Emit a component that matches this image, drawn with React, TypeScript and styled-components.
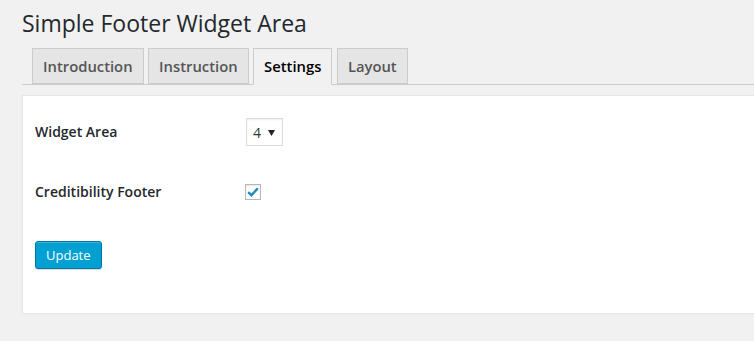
import React from "react";
import styled, { createGlobalStyle } from "styled-components";

const Global = createGlobalStyle`
  html, body { margin: 0; padding: 0; background: #f1f1f1; overflow: hidden; }
  body { font-family: "Open Sans", "Noto Sans", sans-serif; color: #444; }
`;

const Wrap = styled.div`
  padding-left: 22px;
  width: 760px;
`;

const Title = styled.h1`
  margin: 0;
  padding: 9px 0 0 0;
  font-size: 23px;
  font-weight: 400;
  line-height: 29px;
  color: #23282d;
`;

const TabBar = styled.div`
  display: flex;
  gap: 4.5px;
  margin-top: 10px;
  padding-left: 10px;
  border-bottom: 1px solid #ccc;
  height: 36px;
  align-items: flex-end;
`;

const Tab = styled.div<{ $active?: boolean }>`
  box-sizing: border-box;
  height: ${(p) => (p.$active ? "37px" : "36px")};
  margin-bottom: ${(p) => (p.$active ? "-1px" : "0")};
  padding: 5px 10px;
  font-size: 14.8px;
  font-weight: 600;
  line-height: 24px;
  border: 1px solid #ccc;
  border-bottom-color: ${(p) => (p.$active ? "#f1f1f1" : "#ccc")};
  background: ${(p) => (p.$active ? "#f1f1f1" : "#e5e5e5")};
  color: ${(p) => (p.$active ? "#000" : "#555")};
  white-space: nowrap;
`;

const Panel = styled.div`
  margin-top: 10px;
  box-sizing: border-box;
  height: 219px;
  background: #fff;
  border: 1px solid #e5e5e5;
  box-shadow: 0 1px 1px rgba(0, 0, 0, 0.04);
  padding: 17px 12px 0 12px;
`;

const Row = styled.div<{ $gap?: number }>`
  display: grid;
  grid-template-columns: 211px 1fr;
  align-items: center;
  height: 38px;
  margin-top: ${(p) => p.$gap ?? 0}px;
`;

const Label = styled.div`
  font-size: 14px;
  font-weight: 600;
  color: #23282d;
  line-height: 20px;
`;

const SelectBox = styled.div`
  position: relative;
  box-sizing: border-box;
  width: 37px;
  height: 28px;
  border: 1px solid #ddd;
  background: #fff;
  box-shadow: inset 0 1px 2px rgba(0, 0, 0, 0.07);
  display: flex;
  align-items: center;
  padding-left: 6px;
  font-size: 14px;
  color: #32373c;
`;

const Arrow = styled.svg`
  position: absolute;
  right: 7px;
  top: 11px;
`;

const Check = styled.div`
  box-sizing: border-box;
  width: 16px;
  height: 16px;
  margin-left: -1px;
  border: 1px solid #b4b9be;
  background: #fff;
  box-shadow: inset 0 1px 2px rgba(0, 0, 0, 0.1);
  display: flex;
  align-items: center;
  justify-content: center;
`;

const Button = styled.button`
  margin-top: 30px;
  box-sizing: border-box;
  height: 28px;
  padding: 0 10px;
  font-family: "Open Sans", "Noto Sans", sans-serif;
  font-size: 13px;
  line-height: 26px;
  color: #fff;
  background: #00a0d2;
  border: 1px solid #0073aa;
  border-radius: 3px;
  box-shadow: inset 0 1px 0 rgba(120, 200, 230, 0.5), 0 1px 0 rgba(0, 0, 0, 0.15);
  cursor: pointer;
`;

export default function App() {
  return (
    <>
      <Global />
      <Wrap>
        <Title>Simple Footer Widget Area</Title>
        <TabBar>
          <Tab>Introduction</Tab>
          <Tab>Instruction</Tab>
          <Tab $active>Settings</Tab>
          <Tab>Layout</Tab>
        </TabBar>
        <Panel>
          <Row>
            <Label>Widget Area</Label>
            <SelectBox>
              4
              <Arrow width="7" height="6" viewBox="0 0 7 6">
                <path d="M0 0 H7 L3.5 6 Z" fill="#222" />
              </Arrow>
            </SelectBox>
          </Row>
          <Row $gap={22}>
            <Label>Creditibility Footer</Label>
            <Check>
              <svg width="12" height="10" viewBox="0 0 12 10">
                <path d="M1.2 5.2 L4.4 8.2 L10.8 1.2" fill="none" stroke="#1e8cbe" strokeWidth="2.4" strokeLinejoin="miter" />
              </svg>
            </Check>
          </Row>
          <Button>Update</Button>
        </Panel>
      </Wrap>
    </>
  );
}
